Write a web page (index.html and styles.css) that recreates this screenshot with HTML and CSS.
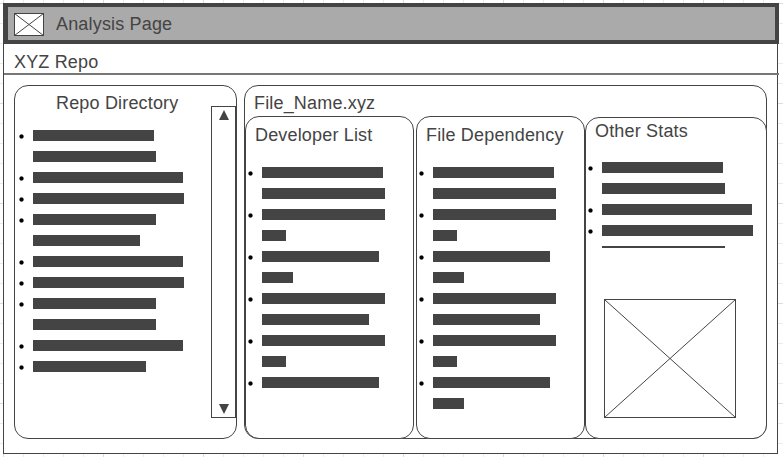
FILE: index.html
```html
<!DOCTYPE html>
<html lang="en">
<head>
<meta charset="utf-8">
<title>Analysis Page</title>
<link rel="stylesheet" href="styles.css">
</head>
<body>
<div class="frame">
  <header class="topbar">
    <svg class="logo" width="30" height="23" viewBox="0 0 30 23"><rect x=".5" y=".5" width="29" height="22"/><path d="M.5.5l29 22M29.5.5l-29 22"/></svg>
    <h1 class="title">Analysis Page</h1>
  </header>
  <div class="repo"><span class="title">XYZ Repo</span></div>
  <main class="content">
    <section class="panel directory">
      <div class="directory-main">
        <h2 class="title">Repo Directory</h2>
        <ul class="lines">
          <li class="dot" style="width:121px"></li>
          <li style="width:123px"></li>
          <li class="dot" style="width:150px"></li>
          <li class="dot" style="width:151px"></li>
          <li class="dot" style="width:123px"></li>
          <li style="width:107px"></li>
          <li class="dot" style="width:150px"></li>
          <li class="dot" style="width:151px"></li>
          <li class="dot" style="width:123px"></li>
          <li style="width:123px"></li>
          <li class="dot" style="width:150px"></li>
          <li class="dot" style="width:113px"></li>
        </ul>
      </div>
      <div class="scrollbar">
        <svg width="10" height="10" viewBox="0 0 10 10"><path d="M5 0l5 10H0z"/></svg>
        <svg width="10" height="10" viewBox="0 0 10 10"><path d="M0 0h10L5 10z"/></svg>
      </div>
    </section>
    <section class="panel file">
      <h2 class="title file-name">File_Name.xyz</h2>
      <div class="columns">
        <section class="panel column developers">
          <h3 class="title">Developer List</h3>
          <ul class="lines">
            <li class="dot" style="width:121px"></li>
            <li style="width:123px"></li>
            <li class="dot" style="width:123px"></li>
            <li style="width:24px"></li>
            <li class="dot" style="width:117px"></li>
            <li style="width:31px"></li>
            <li class="dot" style="width:123px"></li>
            <li style="width:107px"></li>
            <li class="dot" style="width:123px"></li>
            <li style="width:24px"></li>
            <li class="dot" style="width:117px"></li>
          </ul>
        </section>
        <section class="panel column dependency">
          <h3 class="title">File Dependency</h3>
          <ul class="lines">
            <li class="dot" style="width:121px"></li>
            <li style="width:123px"></li>
            <li class="dot" style="width:123px"></li>
            <li style="width:24px"></li>
            <li class="dot" style="width:117px"></li>
            <li style="width:31px"></li>
            <li class="dot" style="width:123px"></li>
            <li style="width:107px"></li>
            <li class="dot" style="width:123px"></li>
            <li style="width:24px"></li>
            <li class="dot" style="width:117px"></li>
            <li style="width:31px"></li>
          </ul>
        </section>
        <section class="panel column stats">
          <h3 class="title">Other Stats</h3>
          <ul class="lines">
            <li class="dot" style="width:121px"></li>
            <li style="width:123px"></li>
            <li class="dot" style="width:150px"></li>
            <li class="dot" style="width:151px"></li>
            <li class="cut" style="width:123px"></li>
          </ul>
          <svg class="picture" width="132" height="119" viewBox="0 0 132 119"><rect x=".5" y=".5" width="131" height="118"/><path d="M.5.5l131 118M131.5.5l-131 118"/></svg>
        </section>
      </div>
    </section>
  </main>
</div>
</body>
</html>
```

FILE: styles.css
```css
* {
  box-sizing: border-box;
}

body {
  margin: 0;
  height: 457px;
  padding: 3px 4px 3px 3px;
  overflow: hidden;
  font-family: "Liberation Sans", Arial, sans-serif;
  color: #444;
  background-color: #fff;
  background-image:
    linear-gradient(90deg, #dcdcdc 1px, transparent 1px),
    linear-gradient(#dcdcdc 1px, transparent 1px),
    linear-gradient(90deg, #ebebeb 1px, transparent 1px),
    linear-gradient(#ebebeb 1px, transparent 1px);
  background-size: 100px 100px, 100px 100px, 20px 20px, 20px 20px;
  background-position: 3px 3px;
}

.frame {
  display: flex;
  flex-direction: column;
  width: 775px;
  height: 451px;
  border: 1px solid #444;
  background: #fff;
}

.title {
  margin: 0;
  font-size: 18px;
  font-weight: 400;
  line-height: 20px;
  letter-spacing: 0.17px;
  white-space: nowrap;
}

.topbar {
  display: flex;
  align-items: center;
  gap: 12px;
  flex: none;
  width: 775px;
  height: 41px;
  margin-top: -1px;
  padding: 1px 6px 0;
  border: 4px solid #444;
  background: #aaa;
}

.logo,
.picture {
  display: block;
  fill: #fff;
  stroke: #444;
}

.repo {
  flex: none;
  width: 775px;
  height: 31px;
  padding: 8px 10px 0;
  border-bottom: 2px solid #777;
}

.repo .title {
  display: block;
}

.content {
  display: flex;
  gap: 7px;
  padding: 10px 10px 0;
}

.panel {
  border: 1px solid #444;
  border-radius: 14px;
  background: #fff;
}

.directory {
  display: flex;
  width: 223px;
  height: 354px;
}

.directory-main {
  width: 196px;
  padding: 7px 0 0 18px;
}

.directory .title {
  margin-left: 23px;
}

.directory .lines {
  margin-top: 17px;
}

.scrollbar {
  display: flex;
  flex-direction: column;
  align-items: center;
  justify-content: space-between;
  width: 25px;
  height: 312px;
  margin-top: 20px;
  padding: 3px 0;
  border: 1px solid #444;
  fill: #444;
}

.lines {
  display: flex;
  flex-direction: column;
  gap: 10px;
  margin: 0;
  padding: 0;
  list-style: none;
}

.lines li {
  position: relative;
  height: 11px;
  background: #444;
}

.lines .dot::before {
  content: "";
  position: absolute;
  left: -15px;
  top: 3px;
  width: 7px;
  height: 7px;
  background: radial-gradient(circle, #000 1.6px, transparent 2.6px);
}

.lines .cut {
  height: 2px;
}

.file {
  width: 523px;
  height: 354px;
}

.file-name {
  padding: 7px 0 0 9px;
}

.columns {
  display: flex;
  align-items: flex-end;
  margin-top: 3px;
}

.column {
  flex: none;
  height: 323px;
  padding-left: 16px;
}

.developers {
  width: 169px;
  margin-right: 2px;
}

.dependency {
  width: 169px;
}

.stats {
  width: 182px;
  height: 322px;
}

.column .title {
  margin: 8px 0 22px -7px;
}

.stats .title {
  margin: 3px 0 21px -7px;
}

.picture {
  margin: 51px 0 0 2px;
}
```
